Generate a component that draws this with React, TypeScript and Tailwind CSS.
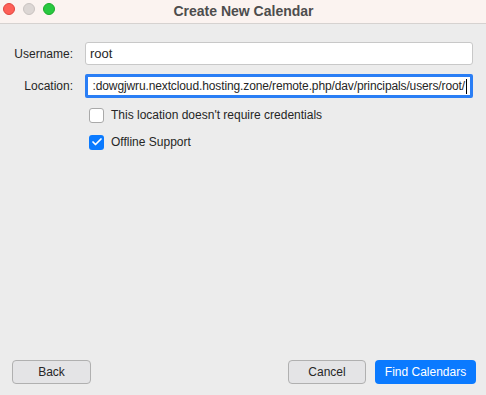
import { Check } from "lucide-react";

const font = { fontFamily: '"Liberation Sans", Arial, sans-serif' };

function TrafficLight({ color, border }: { color: string; border: string }) {
  return <span className={`h-3 w-3 rounded-full border ${color} ${border}`} />;
}

export default function App() {
  return (
    <div style={font} className="flex h-[395px] w-[486px] flex-col bg-[#ececec] text-[12px] text-[#262626]">
      {/* Title bar */}
      <div className="relative flex h-[24px] shrink-0 items-center border-b border-[#d6d2d0] bg-[#fbf3f0]">
        <div className="absolute left-[3px] top-[3px] flex gap-[8px]">
          <TrafficLight color="bg-[#fe5f57]" border="border-[#e0443e]" />
          <TrafficLight color="bg-[#dcd6d4]" border="border-[#c9c3c1]" />
          <TrafficLight color="bg-[#28c840]" border="border-[#1aab29]" />
        </div>
        <div className="w-full pl-[1px] text-center text-[14px] font-bold text-[#4d4d4d]">Create New Calendar</div>
      </div>

      {/* Form */}
      <div className="flex flex-1 flex-col pl-[12px] pr-[13px] pt-[18px]">
        <div className="flex items-center">
          <label className="w-[61px] text-right">Username:</label>
          <div className="ml-[12px] flex h-[23px] flex-1 items-center rounded-[3px] border border-[#c8c8c8] bg-white px-[4px] text-[13px]">
            root
          </div>
        </div>
        <div className="mt-[9px] flex items-center">
          <label className="w-[61px] text-right">Location:</label>
          <div className="ml-[12px] flex h-[24px] min-w-0 flex-1 items-center justify-end overflow-hidden rounded-[2px] border-[3px] border-[#2a7ef5] bg-white pr-[3px]">
            <span className="whitespace-nowrap tracking-[-0.12px]">
              :dowgjwru.nextcloud.hosting.zone/remote.php/dav/principals/users/root/
            </span>
            <span className="ml-[1px] h-[15px] w-[1px] shrink-0 bg-black" />
          </div>
        </div>
        <div className="ml-[77px] mt-[8px] flex items-center gap-[7px]">
          <span className="h-[15px] w-[15px] rounded-[3px] border border-[#a9a9a9] bg-white" />
          <span>This location doesn't require credentials</span>
        </div>
        <div className="ml-[77px] mt-[9px] flex items-center gap-[7px]">
          <span className="flex h-[15px] w-[15px] items-center justify-center rounded-[3px] bg-[#0a7aff]">
            <Check className="h-[12px] w-[12px] text-white" strokeWidth={3.5} />
          </span>
          <span>Offline Support</span>
        </div>
      </div>

      {/* Footer */}
      <div className="flex items-center pb-[11px] pl-[12px] pr-[10px]">
        <button className="h-[24px] w-[79px] rounded-[4px] border border-[#b0b0b0] bg-[#e4e4e6]">Back</button>
        <div className="flex-1" />
        <button className="h-[24px] w-[78px] rounded-[4px] border border-[#b0b0b0] bg-[#e4e4e6]">Cancel</button>
        <button className="ml-[9px] h-[24px] w-[101px] rounded-[4px] bg-[#0a7aff] text-white">Find Calendars</button>
      </div>
    </div>
  );
}
